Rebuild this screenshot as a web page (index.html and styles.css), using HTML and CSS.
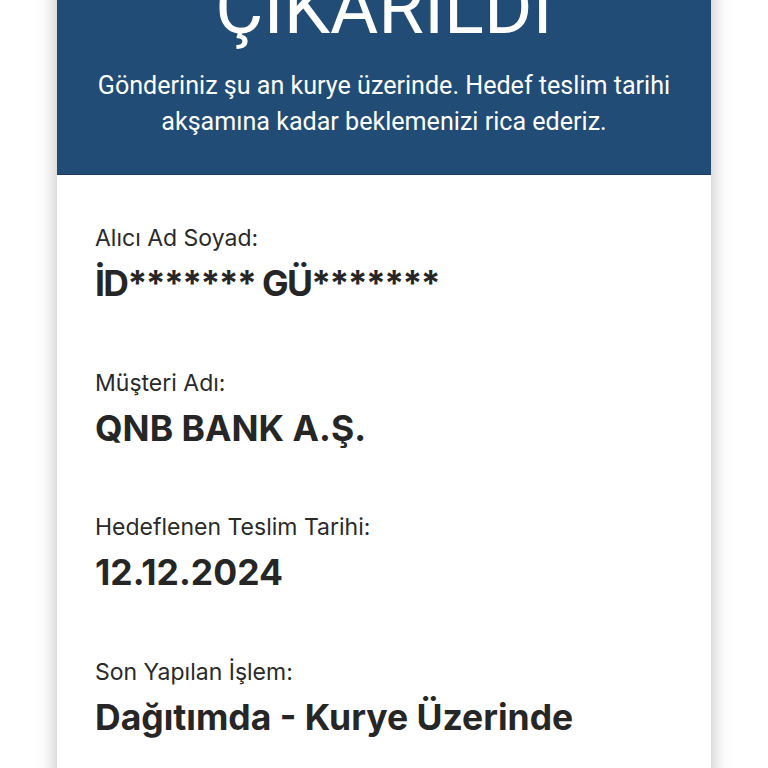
FILE: index.html
```html
<!DOCTYPE html>
<html lang="tr">
<head>
<meta charset="utf-8">
<link rel="stylesheet" href="styles.css">
</head>
<body>
<div class="card">
  <div class="header">
    <h1 class="title">ÇIKARILDI</h1>
    <p class="subtitle">Gönderiniz şu an kurye üzerinde. Hedef teslim tarihi akşamına kadar beklemenizi rica ederiz.</p>
  </div>
  <div class="details">
    <div class="field">
      <div class="label">Alıcı Ad Soyad:</div>
      <div class="value masked">İD******* GÜ*******</div>
    </div>
    <div class="field">
      <div class="label">Müşteri Adı:</div>
      <div class="value">QNB BANK A.Ş.</div>
    </div>
    <div class="field">
      <div class="label">Hedeflenen Teslim Tarihi:</div>
      <div class="value">12.12.2024</div>
    </div>
    <div class="field">
      <div class="label">Son Yapılan İşlem:</div>
      <div class="value">Dağıtımda - Kurye Üzerinde</div>
    </div>
  </div>
</div>
</body>
</html>
```
FILE: styles.css
```css
html, body {
  margin: 0;
  padding: 0;
  background: #ffffff;
  overflow: hidden;
}
body {
  font-family: Inter, "Noto Sans", sans-serif;
}
.card {
  width: 654px;
  margin: -42px 0 0 57px;
  background: #ffffff;
  box-shadow: 0 0 18px rgba(0, 0, 0, 0.28);
  min-height: 900px;
}
.header {
  background: #214c76;
  border-bottom: 1px solid #1a3d60;
  color: #ffffff;
  text-align: center;
  padding: 0 30px 34px;
}
.title {
  margin: 0;
  font-family: Roboto, sans-serif;
  font-weight: 400;
  font-size: 74px;
  line-height: 100px;
}
.subtitle {
  margin: 10px 0 0;
  font-family: Roboto, sans-serif;
  font-size: 25.1px;
  line-height: 36px;
}
.details {
  padding: 48px 38px;
  display: flex;
  flex-direction: column;
  gap: 61.5px;
}
.label {
  font-size: 23px;
  color: #2a2a2a;
  line-height: 30px;
}
.value {
  font-size: 35.5px;
  font-weight: 700;
  color: #262626;
  line-height: 44px;
  margin-top: 9px;
}
.value.masked {
  letter-spacing: -1.6px;
}
```
